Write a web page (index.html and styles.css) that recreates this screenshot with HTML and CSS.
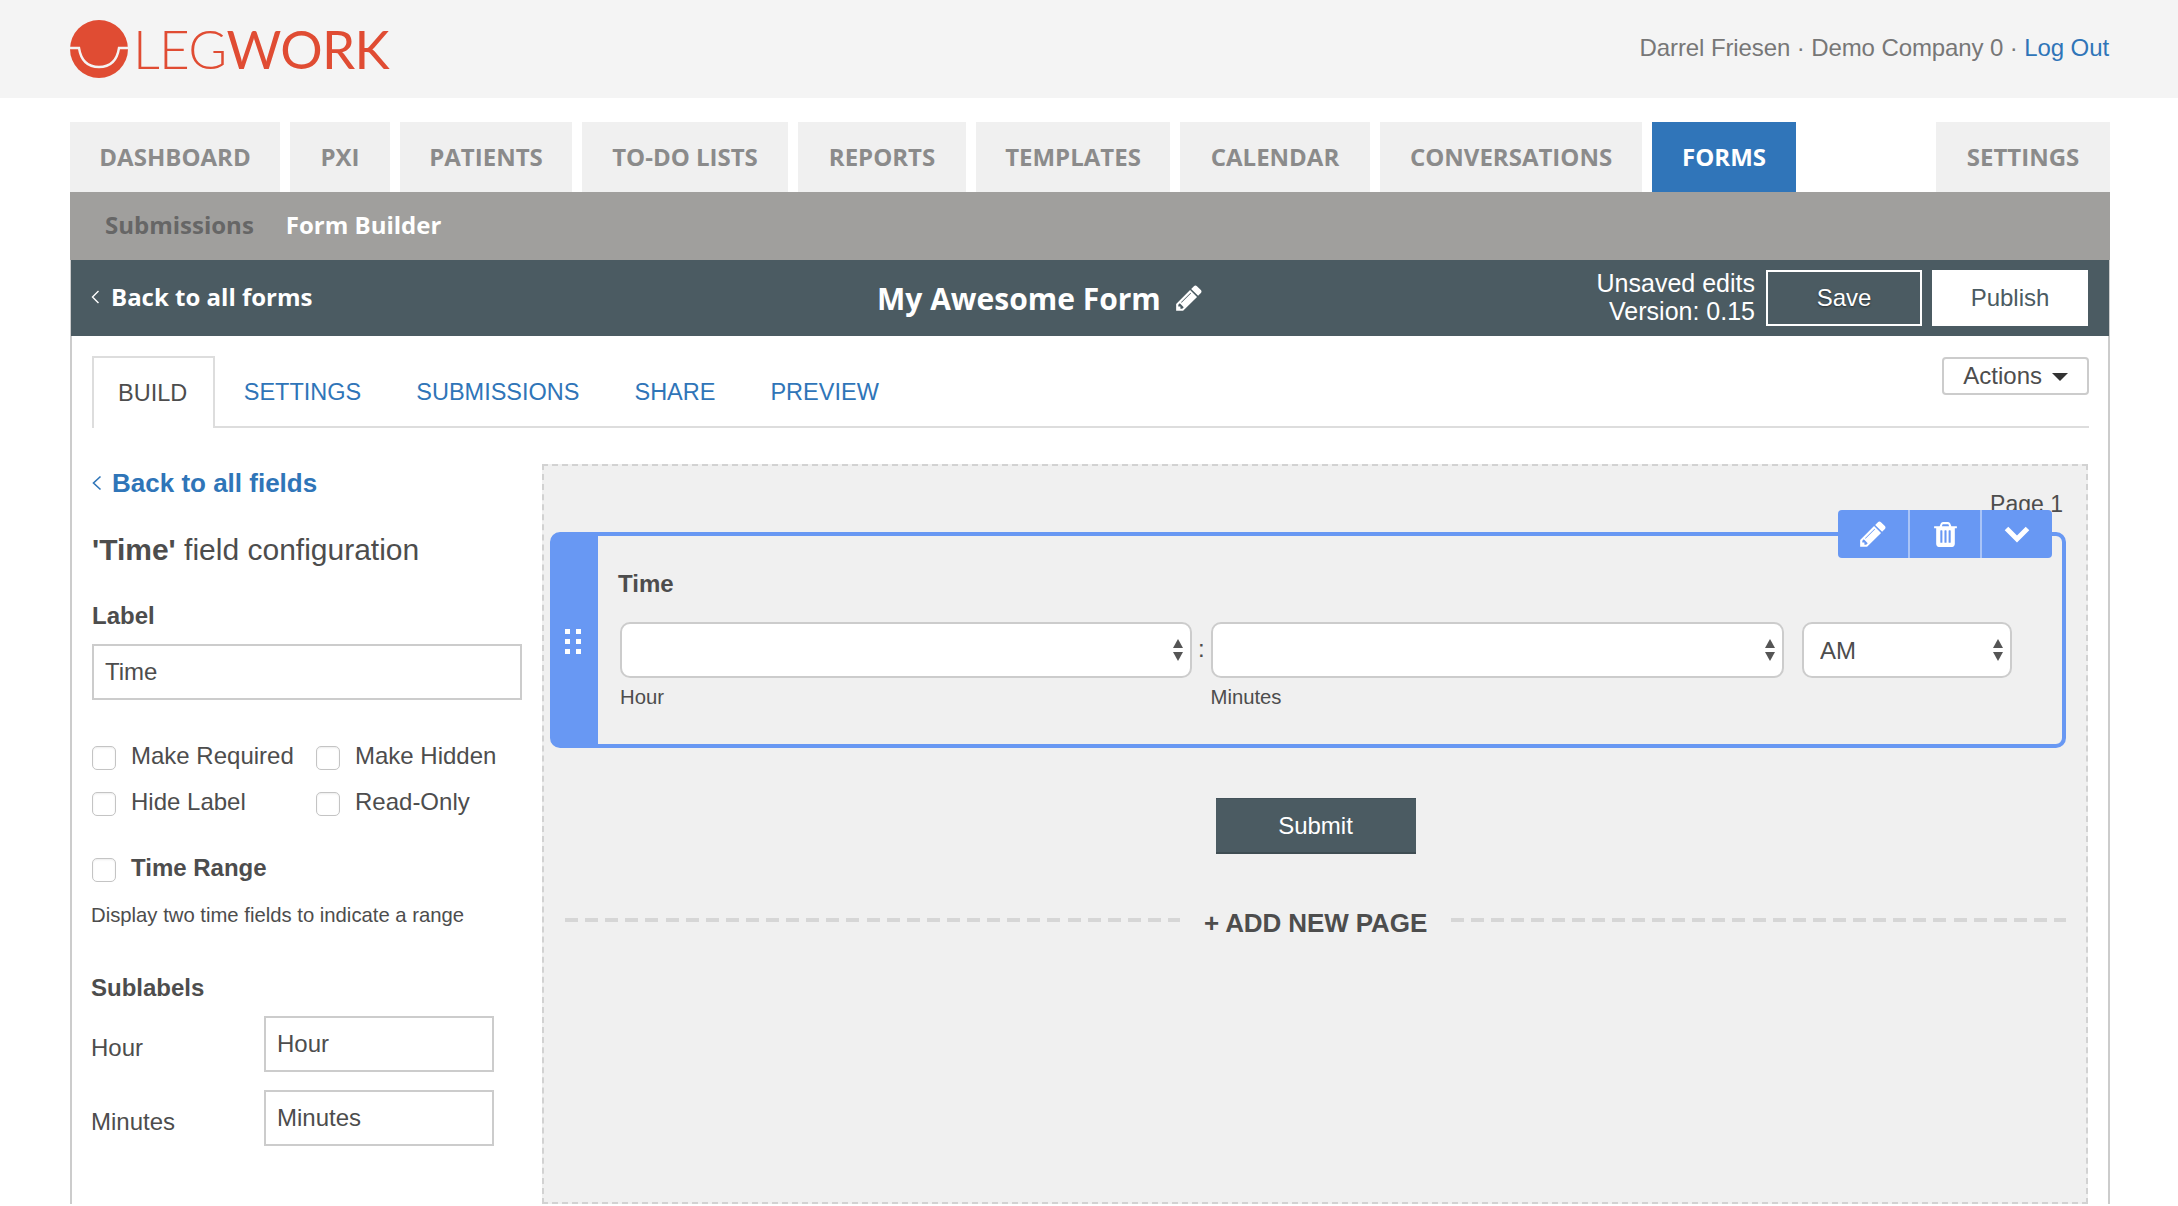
FILE: index.html
```html
<!DOCTYPE html>
<html lang="en">
<head>
    <meta charset="UTF-8">
    <title>Legwork - Form Builder</title>
    <link rel="stylesheet" href="styles.css">
</head>
<body>
    <header class="top-header">
        <div class="logo">
            <svg class="logo-mark" width="58" height="58" viewBox="0 0 58 58">
                <circle cx="29" cy="29" r="29" fill="#e04c33"/>
                <path d="M0 28 H9 C11 41 18 47 29 47 C40 47 47 41 49 28 H58" fill="none" stroke="#f4f4f4" stroke-width="2.4"/>
            </svg>
            <span class="logo-text"><span class="logo-light">LEG</span>WORK</span>
        </div>
        <div class="user-info">Darrel Friesen · Demo Company 0 · <a href="#">Log Out</a></div>
    </header>

    <div class="wrap">
        <nav class="main-nav">
            <a class="nav-tab" href="#">DASHBOARD</a>
            <a class="nav-tab" href="#">PXI</a>
            <a class="nav-tab" href="#">PATIENTS</a>
            <a class="nav-tab" href="#">TO-DO LISTS</a>
            <a class="nav-tab" href="#">REPORTS</a>
            <a class="nav-tab" href="#">TEMPLATES</a>
            <a class="nav-tab" href="#">CALENDAR</a>
            <a class="nav-tab" href="#">CONVERSATIONS</a>
            <a class="nav-tab active" href="#">FORMS</a>
            <a class="nav-tab nav-right" href="#">SETTINGS</a>
        </nav>

        <div class="sub-nav">
            <a href="#">Submissions</a>
            <a class="active" href="#">Form Builder</a>
        </div>

        <div class="panel">
            <div class="form-bar">
                <a class="back-forms" href="#">
                    <svg width="9" height="14" viewBox="0 0 9 14"><path d="M7.5 1 L1.5 7 L7.5 13" fill="none" stroke="#fff" stroke-width="1.4"/></svg>
                    Back to all forms
                </a>
                <div class="form-title">
                    My Awesome Form
                    <svg width="30" height="30" viewBox="0 0 1792 1792"><path fill="#fff" d="M491 1536l91-91-235-235-91 91v107h128v128h107zm523-928q0-22-22-22-10 0-17 7l-542 542q-7 7-7 17 0 22 22 22 10 0 17-7l542-542q7-7 7-17zm-54-192l416 416-832 832h-416v-416zm683 96q0 53-37 90l-166 166-416-416 166-165q36-38 90-38 53 0 91 38l235 234q37 39 37 91z"/></svg>
                </div>
                <div class="form-actions">
                    <div class="form-status">Unsaved edits<br>Version: 0.15</div>
                    <button class="btn-save">Save</button>
                    <button class="btn-publish">Publish</button>
                </div>
            </div>

            <div class="panel-body">
                <div class="tabs">
                    <a class="tab active" href="#">BUILD</a>
                    <a class="tab" href="#">SETTINGS</a>
                    <a class="tab" href="#">SUBMISSIONS</a>
                    <a class="tab" href="#">SHARE</a>
                    <a class="tab" href="#">PREVIEW</a>
                    <button class="btn-actions">Actions <span class="caret"></span></button>
                </div>

                <div class="builder">
                    <aside class="config">
                        <a class="back-fields" href="#">
                            <svg width="10" height="16" viewBox="0 0 10 16"><path d="M8.5 1.5 L1.5 8 L8.5 14.5" fill="none" stroke="#2f75b8" stroke-width="1.6"/></svg>
                            Back to all fields
                        </a>
                        <h3 class="config-title"><b>'Time'</b> field configuration</h3>
                        <label class="config-label">Label</label>
                        <input class="text-input" type="text" value="Time">

                        <div class="check-grid">
                            <label class="check"><input type="checkbox"><span>Make Required</span></label>
                            <label class="check"><input type="checkbox"><span>Make Hidden</span></label>
                            <label class="check"><input type="checkbox"><span>Hide Label</span></label>
                            <label class="check"><input type="checkbox"><span>Read-Only</span></label>
                        </div>

                        <label class="check check-range"><input type="checkbox"><span><b>Time Range</b></span></label>
                        <p class="hint">Display two time fields to indicate a range</p>

                        <div class="config-label sublabels-title">Sublabels</div>
                        <div class="sublabels">
                            <label>Hour</label>
                            <input class="text-input" type="text" value="Hour">
                            <label>Minutes</label>
                            <input class="text-input" type="text" value="Minutes">
                        </div>
                    </aside>

                    <section class="canvas">
                        <div class="page-label">Page 1</div>
                        <div class="field">
                            <div class="field-handle">
                                <svg width="16" height="25" viewBox="0 0 16 25" fill="#fff">
                                    <rect x="0" y="0" width="5" height="5"/><rect x="11" y="0" width="5" height="5"/>
                                    <rect x="0" y="10" width="5" height="5"/><rect x="11" y="10" width="5" height="5"/>
                                    <rect x="0" y="20" width="5" height="5"/><rect x="11" y="20" width="5" height="5"/>
                                </svg>
                            </div>
                            <div class="field-body">
                                <div class="field-title">Time</div>
                                <div class="time-row">
                                    <div class="time-col col-hour">
                                        <div class="select-box"><select><option></option></select></div>
                                        <span class="sublabel">Hour</span>
                                    </div>
                                    <span class="time-sep">:</span>
                                    <div class="time-col col-min">
                                        <div class="select-box"><select><option></option></select></div>
                                        <span class="sublabel">Minutes</span>
                                    </div>
                                    <div class="time-col col-ampm">
                                        <div class="select-box"><select><option>AM</option></select></div>
                                    </div>
                                </div>
                            </div>
                            <div class="field-tools">
                                <button class="tool">
                                    <svg width="30" height="30" viewBox="0 0 1792 1792"><path fill="#fff" d="M491 1536l91-91-235-235-91 91v107h128v128h107zm523-928q0-22-22-22-10 0-17 7l-542 542q-7 7-7 17 0 22 22 22 10 0 17-7l542-542q7-7 7-17zm-54-192l416 416-832 832h-416v-416zm683 96q0 53-37 90l-166 166-416-416 166-165q36-38 90-38 53 0 91 38l235 234q37 39 37 91z"/></svg>
                                </button>
                                <button class="tool">
                                    <svg width="29" height="29" viewBox="0 0 1792 1792"><path fill="#fff" d="M704 1376v-704q0-14-9-23t-23-9h-64q-14 0-23 9t-9 23v704q0 14 9 23t23 9h64q14 0 23-9t9-23zm256 0v-704q0-14-9-23t-23-9h-64q-14 0-23 9t-9 23v704q0 14 9 23t23 9h64q14 0 23-9t9-23zm256 0v-704q0-14-9-23t-23-9h-64q-14 0-23 9t-9 23v704q0 14 9 23t23 9h64q14 0 23-9t9-23zm-544-992h448l-48-117q-7-9-17-11h-317q-10 2-17 11zm928 32v64q0 14-9 23t-23 9h-96v948q0 83-47 143.5t-113 60.5h-832q-66 0-113-58.5t-47-141.5v-952h-96q-14 0-23-9t-9-23v-64q0-14 9-23t23-9h309l70-167q15-37 54-63t79-26h320q40 0 79 26t54 63l70 167h309q14 0 23 9t9 23z"/></svg>
                                </button>
                                <button class="tool">
                                    <svg width="26" height="18" viewBox="0 0 26 18"><path d="M2.5 3.5 L13 14 L23.5 3.5" fill="none" stroke="#fff" stroke-width="5"/></svg>
                                </button>
                            </div>
                        </div>

                        <div class="submit-row"><button class="btn-submit">Submit</button></div>

                        <div class="add-page">
                            <span class="dash"></span>
                            <span class="add-text">+ ADD NEW PAGE</span>
                            <span class="dash"></span>
                        </div>
                    </section>
                </div>
            </div>
        </div>
    </div>
</body>
</html>
```

FILE: styles.css
```css
body {
    margin: 0;
    background: #fff;
    font-family: "Liberation Sans", Arial, sans-serif;
    font-size: 24px;
    color: #4d4d4d;
    height: 1206px;
    overflow: hidden;
}

a {
    text-decoration: none;
}

button {
    font-family: inherit;
    cursor: pointer;
}

/* top header */
.top-header {
    height: 98px;
    background: #f4f4f4;
    padding: 0 69px 0 70px;
    display: flex;
    justify-content: space-between;
    align-items: center;
}

.logo {
    display: flex;
    align-items: center;
    gap: 5px;
    margin-top: -1px;
}

.logo-mark {
    display: block;
}

.logo-text {
    font-family: Lato, sans-serif;
    font-size: 53px;
    line-height: 58px;
    color: #e04c33;
    letter-spacing: -0.7px;
}

.logo-light {
    font-weight: 300;
}

.user-info {
    color: #777;
    margin-top: -3px;
    letter-spacing: -0.1px;
}

.user-info a {
    color: #2f75b8;
}

.wrap {
    margin: 24px 68px 0 70px;
}

/* main nav */
.main-nav {
    display: grid;
    grid-template-columns: 210px 100px 172px 206px 168px 194px 190px 262px 144px 1fr 174px;
    gap: 10px;
    height: 70px;
}

.nav-tab {
    background: #f0f0f0;
    color: #8b8b8b;
    font-family: "Open Sans", sans-serif;
    font-weight: 700;
    font-size: 24px;
    line-height: 70px;
    text-align: center;
}

.nav-tab.active {
    background: #3075b9;
    color: #fff;
}

.nav-right {
    grid-column: 11;
}

.sub-nav {
    height: 68px;
    background: #a09f9d;
    display: flex;
    align-items: center;
    gap: 32px;
    padding: 0 0 4px 35px;
    box-sizing: border-box;
    font-family: "Open Sans", sans-serif;
    font-weight: 700;
    font-size: 24px;
}

.sub-nav a {
    color: #666;
}

.sub-nav a.active {
    color: #fff;
}

/* panel */
.panel {
    border-left: 2px solid #ccc;
    border-right: 2px solid #ccc;
}

.form-bar {
    height: 76px;
    background: #4b5b62;
    color: #fff;
    display: flex;
    align-items: center;
    margin-left: -1px;
    margin-right: -1px;
    padding: 0 21px 0 20px;
    position: relative;
}

.back-forms {
    color: #fff;
    font-family: "Open Sans", sans-serif;
    font-weight: 700;
    font-size: 24px;
    display: flex;
    align-items: center;
    gap: 11px;
    margin-top: -3px;
}

.form-title {
    font-family: "Open Sans", sans-serif;
    font-weight: 700;
    font-size: 30px;
    position: absolute;
    left: 806px;
    top: 0;
    height: 76px;
    display: flex;
    align-items: center;
    gap: 13px;
}

.form-actions {
    margin-left: auto;
    display: flex;
    align-items: center;
}

.form-status {
    text-align: right;
    font-size: 25px;
    line-height: 28px;
    margin-right: 11px;
    margin-top: -3px;
}

.btn-save,
.btn-publish {
    width: 156px;
    height: 56px;
    font-size: 24px;
    padding: 0;
}

.btn-save {
    background: #4b5b62;
    color: #fff;
    border: 2px solid #fff;
    margin-right: 10px;
    text-shadow: 0 1px 2px rgba(0,0,0,0.5);
}

.btn-publish {
    background: #fff;
    color: #4b5b62;
    border: 0;
}

.panel-body {
    padding: 20px 19px 0 20px;
}

/* tabs */
.tabs {
    display: flex;
    height: 72px;
    border-bottom: 2px solid #ddd;
    box-sizing: border-box;
    font-size: 23.5px;
}

.tab {
    color: #2f75b8;
    line-height: 72px;
    padding: 0 27.5px;
    height: 72px;
    box-sizing: border-box;
}

.tab.active {
    color: #4d4d4d;
    background: #fff;
    border: 2px solid #ddd;
    border-bottom: 0;
    line-height: 70px;
    padding: 0 26px 0 24px;
    margin-right: 1px;
}

.btn-actions {
    margin-left: auto;
    margin-top: 1px;
    width: 147px;
    height: 38px;
    background: #fff;
    border: 2px solid #ccc;
    border-radius: 4px;
    color: #4d4d4d;
    font-size: 24px;
    padding: 0;
    line-height: 32px;
}

.caret {
    display: inline-block;
    border-left: 8px solid transparent;
    border-right: 8px solid transparent;
    border-top: 8px solid #333;
    margin-left: 3px;
    vertical-align: 3px;
}

.builder {
    display: grid;
    grid-template-columns: 430px 1fr;
    gap: 20px;
    margin: 36px 1px 0 0;
}

/* left config column */
.config {
    padding-top: 4px;
}

.back-fields {
    display: flex;
    align-items: center;
    gap: 10px;
    color: #2f75b8;
    font-weight: 700;
    font-size: 26px;
    line-height: 30px;
}

.config-title {
    margin: 34px 0 0;
    font-size: 30px;
    line-height: 36px;
    font-weight: 400;
}

.config-label {
    display: block;
    margin-top: 34px;
    font-weight: 700;
    line-height: 28px;
}

.text-input {
    display: block;
    box-sizing: border-box;
    width: 100%;
    height: 56px;
    margin-top: 14px;
    border: 2px solid #ccc;
    padding: 0 11px;
    font-family: inherit;
    font-size: 24px;
    color: #4d4d4d;
    background: #fff;
    outline: none;
}

.check-grid {
    display: grid;
    grid-template-columns: 224px 1fr;
    row-gap: 22px;
    margin-top: 46px;
}

.check {
    display: flex;
    gap: 15px;
    line-height: 24px;
}

.check span {
    margin-top: -2px;
}

.check input {
    appearance: none;
    width: 24px;
    height: 24px;
    margin: 0;
    flex: none;
    box-sizing: border-box;
    background: #fff;
    border: 1px solid #c4c4c4;
    border-radius: 5px;
    box-shadow: inset 0 1px 2px rgba(0,0,0,0.08);
}

.check-range {
    margin-top: 42px;
}

.hint {
    margin: 21px 0 0 -1px;
    font-size: 20.3px;
    line-height: 24px;
}

.sublabels-title {
    margin-top: 47px;
    margin-left: -1px;
}

.sublabels {
    display: grid;
    grid-template-columns: 172px 230px;
    row-gap: 18px;
    margin-top: 14px;
    align-items: center;
}

.sublabels label {
    margin-left: -1px;
    padding-top: 8px;
}

.sublabels .text-input {
    margin-top: 0;
}

/* form canvas */
.canvas {
    background: #f0f0f0;
    border: 2px dashed #d2d2d2;
    height: 740px;
    box-sizing: border-box;
    padding: 23px 20px 0 6px;
}

.page-label {
    text-align: right;
    font-size: 23px;
    line-height: 28px;
    margin: 1px 3px 14px 0;
}

.field {
    position: relative;
    display: flex;
    height: 216px;
    box-sizing: border-box;
    border: 4px solid #6898f3;
    border-radius: 10px;
}

.field-handle {
    width: 44px;
    box-sizing: border-box;
    padding: 3px 6px 0 0;
    flex: none;
    background: #6898f3;
    display: flex;
    align-items: center;
    justify-content: center;
}

.field-body {
    flex: 1;
    padding: 34px 0 0 20px;
}

.field-title {
    font-weight: 700;
    line-height: 28px;
}

.time-row {
    display: flex;
    margin: 24px 0 0 2px;
}

.time-col {
    display: flex;
    flex-direction: column;
}

.col-hour {
    width: 572px;
}

.col-min {
    width: 573.5px;
    margin-right: 18px;
}

.col-ampm {
    width: 210px;
}

.time-sep {
    width: 18.5px;
    text-align: center;
    line-height: 54px;
}

.select-box {
    position: relative;
    height: 56px;
}

.select-box::before,
.select-box::after {
    content: "";
    position: absolute;
    right: 9px;
    border-left: 5.5px solid transparent;
    border-right: 5.5px solid transparent;
    pointer-events: none;
}

.select-box::before {
    top: 17px;
    border-bottom: 9px solid #555;
}

.select-box::after {
    top: 30px;
    border-top: 9px solid #555;
}

.select-box select {
    appearance: none;
    display: block;
    width: 100%;
    height: 56px;
    box-sizing: border-box;
    background: #fff;
    border: 2px solid #ccc;
    border-radius: 10px;
    padding: 0 16px;
    font-family: inherit;
    font-size: 24px;
    color: #4d4d4d;
    outline: none;
}

.sublabel {
    font-size: 20.3px;
    line-height: 24px;
    margin-top: 7px;
}

.field-tools {
    position: absolute;
    top: -26px;
    right: 10px;
    display: flex;
    width: 214px;
    height: 48px;
    background: #6898f3;
    border-radius: 4px;
    overflow: hidden;
}

.tool {
    flex: 1;
    background: none;
    border: 0;
    padding: 0;
    display: flex;
    align-items: center;
    justify-content: center;
}

.tool + .tool {
    border-left: 2px solid #a9c4f7;
}

.submit-row {
    display: flex;
    justify-content: center;
    margin: 50px 0 0 15px;
}

.btn-submit {
    width: 200px;
    height: 56px;
    background: #4b5b62;
    border: 0;
    border-bottom: 2px solid #3f4d53;
    border-top: 1px solid #43525a;
    color: #fff;
    font-size: 24px;
    padding: 0;
}

.add-page {
    display: flex;
    align-items: center;
    gap: 24px;
    height: 36px;
    margin: 51px 0 0 15px;
}

.dash {
    flex: 1;
    height: 4px;
    margin-top: -6px;
    background: repeating-linear-gradient(90deg, #d6d6d6 0 13px, transparent 13px 20.1px);
}

.add-text {
    font-weight: 700;
    font-size: 26px;
    line-height: 36px;
    letter-spacing: -0.1px;
}
```
